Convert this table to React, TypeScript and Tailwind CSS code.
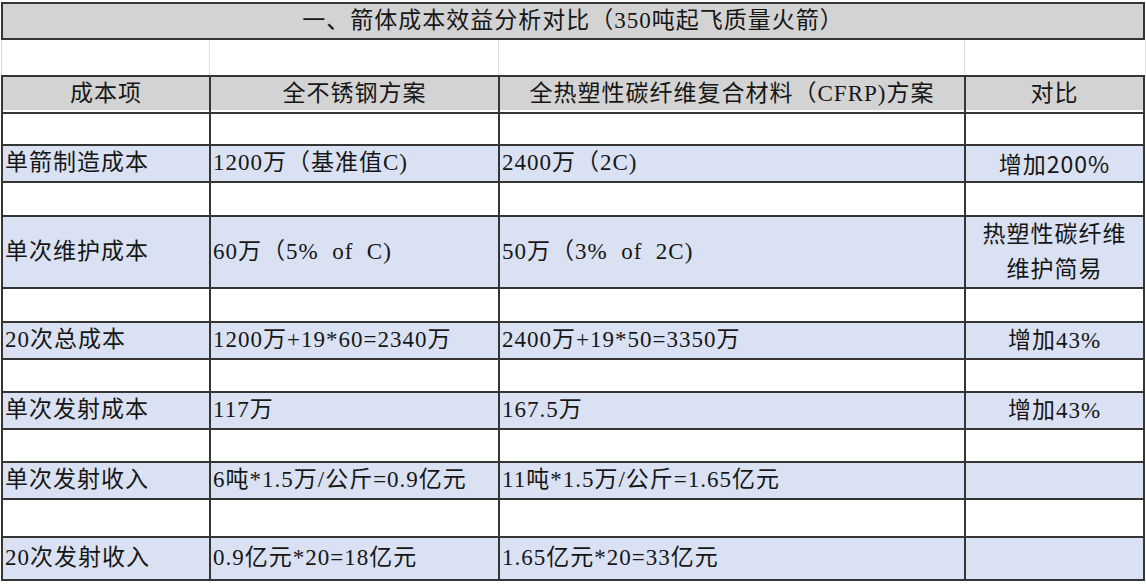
const font = { fontFamily: '"Liberation Serif", "Noto Sans CJK SC", serif' };

type Row = {
  item: string;
  steel: string;
  cfrp: string;
  diff?: string[];
  diffSans?: boolean;
  h: string;
  gapH: string;
};

const rows: Row[] = [
  { item: "单箭制造成本", steel: "1200万（基准值C)", cfrp: "2400万（2C)", diff: ["增加200%"], diffSans: true, h: "h-[36px]", gapH: "h-[36px]" },
  { item: "单次维护成本", steel: "60万（5%  of  C)", cfrp: "50万（3%  of  2C)", diff: ["热塑性碳纤维", "维护简易"], h: "h-[70px]", gapH: "h-[35px]" },
  { item: "20次总成本", steel: "1200万+19*60=2340万", cfrp: "2400万+19*50=3350万", diff: ["增加43%"], h: "h-[35px]", gapH: "h-[36px]" },
  { item: "单次发射成本", steel: "117万", cfrp: "167.5万", diff: ["增加43%"], h: "h-[36px]", gapH: "h-[35px]" },
  { item: "单次发射收入", steel: "6吨*1.5万/公斤=0.9亿元", cfrp: "11吨*1.5万/公斤=1.65亿元", h: "h-[36px]", gapH: "h-[34px]" },
  { item: "20次发射收入", steel: "0.9亿元*20=18亿元", cfrp: "1.65亿元*20=33亿元", h: "h-[43px]", gapH: "h-[39px]" },
];

const grid = "grid grid-cols-[208px_289px_466px_179px] border-l-2 border-[#353535]";
const cell = "border-r-2 border-b-2 border-[#353535] flex items-center";

function GapRow({ h }: { h: string }) {
  return (
    <div className={`${grid} ${h} bg-white`}>
      <div className={cell} />
      <div className={cell} />
      <div className={cell} />
      <div className={cell} />
    </div>
  );
}

export default function App() {
  return (
    <div
      className="w-[1146px] h-[585px] bg-white pt-[2px] pl-[1px] text-[23px] tracking-[1px] text-[#161616]"
      style={font}
    >
      <div className="w-[1144px]">
        <div className="h-[38px] border-2 border-[#353535] bg-[#d3d3d3] flex items-center justify-center">
          一、箭体成本效益分析对比（350吨起飞质量火箭）
        </div>
        <div className="grid grid-cols-[208px_289px_466px_181px] h-[35px] border-l border-[#d8d8d8]">
          <div className="border-r border-[#e0e0e0]" />
          <div className="border-r border-[#e0e0e0]" />
          <div className="border-r border-[#e0e0e0]" />
          <div className="border-r border-[#e0e0e0]" />
        </div>
        <div className={`${grid} border-t-2 h-[35px] bg-[#d3d3d3]`}>
          <div className={`${cell} justify-center`}>成本项</div>
          <div className={`${cell} justify-center`}>全不锈钢方案</div>
          <div className={`${cell} justify-center`}>全热塑性碳纤维复合材料（CFRP)方案</div>
          <div className={`${cell} justify-center`}>对比</div>
        </div>
        {rows.map((r) => (
          <div key={r.item}>
            <GapRow h={r.gapH} />
            <div className={`${grid} ${r.h} bg-[#d9e1f2]`}>
              <div className={`${cell} pl-[2px]`}>{r.item}</div>
              <div className={`${cell} pl-[2px] whitespace-pre`}>{r.steel}</div>
              <div className={`${cell} pl-[2px] whitespace-pre`}>{r.cfrp}</div>
              <div
                className={`${cell} flex-col justify-center leading-[35px]`}
                style={r.diffSans ? { fontFamily: '"Noto Sans CJK SC", sans-serif' } : undefined}
              >
                {r.diff?.map((t) => (
                  <span key={t}>{t}</span>
                ))}
              </div>
            </div>
          </div>
        ))}
      </div>
    </div>
  );
}
